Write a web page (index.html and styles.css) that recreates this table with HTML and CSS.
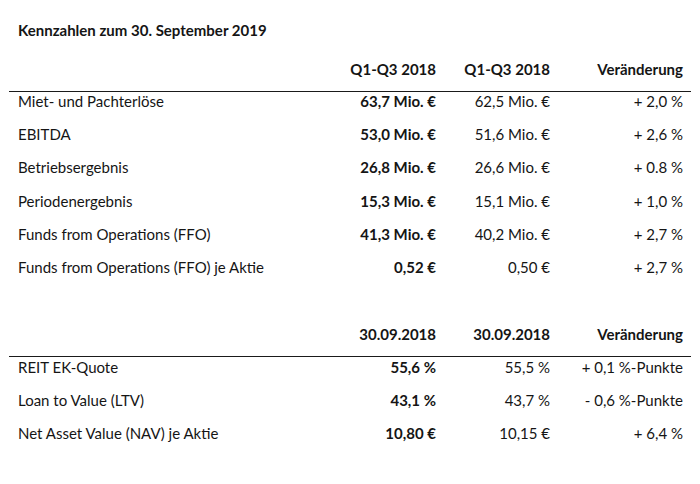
FILE: index.html
```html
<!DOCTYPE html>
<html lang="de">
<head>
<meta charset="utf-8">
<title>Kennzahlen</title>
<link rel="stylesheet" href="styles.css">
</head>
<body>
<div class="page">
  <h1 class="title">Kennzahlen zum 30. September 2019</h1>

  <div class="table t1">
    <div class="row head">
      <span class="label"></span>
      <span class="num">Q1-Q3 2018</span>
      <span class="num">Q1-Q3 2018</span>
      <span class="num">Veränderung</span>
    </div>
    <div class="row">
      <span class="label">Miet- und Pachterlöse</span>
      <span class="num b">63,7 Mio. €</span>
      <span class="num">62,5 Mio. €</span>
      <span class="num">+ 2,0 %</span>
    </div>
    <div class="row">
      <span class="label">EBITDA</span>
      <span class="num b">53,0 Mio. €</span>
      <span class="num">51,6 Mio. €</span>
      <span class="num">+ 2,6 %</span>
    </div>
    <div class="row">
      <span class="label">Betriebsergebnis</span>
      <span class="num b">26,8 Mio. €</span>
      <span class="num">26,6 Mio. €</span>
      <span class="num">+ 0.8 %</span>
    </div>
    <div class="row">
      <span class="label">Periodenergebnis</span>
      <span class="num b">15,3 Mio. €</span>
      <span class="num">15,1 Mio. €</span>
      <span class="num">+ 1,0 %</span>
    </div>
    <div class="row">
      <span class="label">Funds from Operations (FFO)</span>
      <span class="num b">41,3 Mio. €</span>
      <span class="num">40,2 Mio. €</span>
      <span class="num">+ 2,7 %</span>
    </div>
    <div class="row">
      <span class="label">Funds from Operations (FFO) je Aktie</span>
      <span class="num b">0,52 €</span>
      <span class="num">0,50 €</span>
      <span class="num">+ 2,7 %</span>
    </div>
  </div>

  <div class="table t2">
    <div class="row head">
      <span class="label"></span>
      <span class="num">30.09.2018</span>
      <span class="num">30.09.2018</span>
      <span class="num">Veränderung</span>
    </div>
    <div class="row">
      <span class="label">REIT EK-Quote</span>
      <span class="num b">55,6 %</span>
      <span class="num">55,5 %</span>
      <span class="num">+ 0,1 %-Punkte</span>
    </div>
    <div class="row">
      <span class="label">Loan to Value (LTV)</span>
      <span class="num b">43,1 %</span>
      <span class="num">43,7 %</span>
      <span class="num">- 0,6 %-Punkte</span>
    </div>
    <div class="row">
      <span class="label">Net Asset Value (NAV) je Aktie</span>
      <span class="num b">10,80 €</span>
      <span class="num">10,15 €</span>
      <span class="num">+ 6,4 %</span>
    </div>
  </div>
</div>
</body>
</html>
```

FILE: styles.css
```css
html, body {
  margin: 0;
  padding: 0;
  background: #ffffff;
}

body {
  font-family: "Lato", "Liberation Sans", sans-serif;
  font-size: 15px;
  color: #151515;
}

.page {
  width: 700px;
  height: 484px;
  box-sizing: border-box;
  padding: 22px 9px 0 9px;
}

.title {
  margin: 0 0 0 9px;
  font-size: 15px;
  line-height: 17px;
  height: 17px;
  font-weight: bold;
}

.table.t1 {
  margin-top: 22px;
}

.table.t2 {
  margin-top: 34.5px;
}

.row {
  display: grid;
  grid-template-columns: 307px 120px 114px 133px 8px;
  line-height: 17px;
  height: 33.4px;
  box-sizing: border-box;
  padding-top: 1px;
  white-space: nowrap;
}

.t2 .row {
  height: 33.1px;
  padding-top: 2px;
}

.row.head {
  height: 30.5px;
  padding-top: 0;
  border-bottom: 1px solid #1a1a1a;
  font-weight: bold;
}

.t2 .row.head {
  height: 30.5px;
  padding-top: 0;
}

.label {
  padding-left: 9px;
}

.num {
  text-align: right;
}

.b {
  font-weight: bold;
}
```
